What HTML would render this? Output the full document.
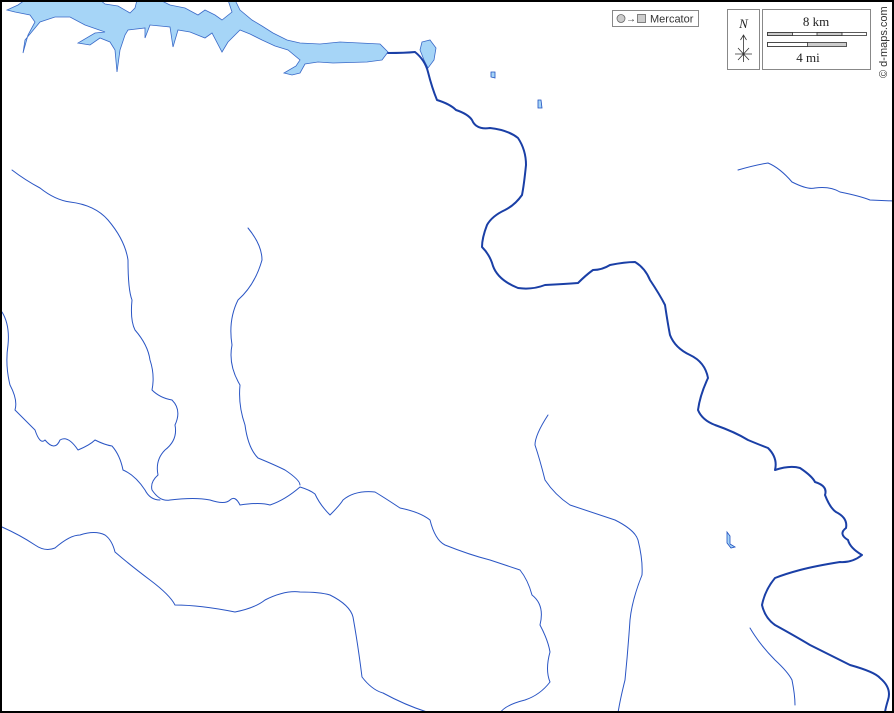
<!DOCTYPE html>
<html><head><meta charset="utf-8"><style>
html,body{margin:0;padding:0;background:#fff}
svg{display:block}
</style></head><body>
<svg width="894" height="713" viewBox="0 0 894 713" xmlns="http://www.w3.org/2000/svg">
<rect x="0" y="0" width="894" height="713" fill="#fff"/>
<!-- lake -->
<path d="M7,10 L18,5 L25,0 L100,0 L105,4 L118,6 L130,13 L135,8 L137,0 L160,0 L170,5 L185,8 L198,15 L205,10 L215,15 L222,20 L232,12 L228,0 L235,0 L240,10 L252,20 L262,26 L273,33 L287,40 L300,43 L320,44 L340,42 L360,43 L380,44 L388,52 L382,60 L367,62 L333,63 L318,62 L305,64 L300,73 L292,75 L284,73 L296,66 L300,60 L288,50 L275,46 L262,40 L250,34 L240,30 L228,42 L222,52 L212,33 L205,38 L190,32 L178,30 L173,47 L170,27 L150,25 L145,38 L145,28 L128,30 L125,35 L120,50 L117,72 L115,50 L110,42 L100,38 L90,45 L78,43 L95,33 L105,32 L85,25 L70,17 L55,17 L40,22 L25,40 L23,53 L28,35 L35,22 L30,15 L15,12 Z" fill="#a6d5f7" stroke="#3a6ac8" stroke-width="0.8"/>
<path d="M422,42 L430,40 L436,48 L434,60 L428,68 L424,60 L420,50 Z" fill="#a6d5f7" stroke="#3a6ac8" stroke-width="0.8"/>
<path d="M491,72 l4,0 l0,6 l-4,-1 z M538,100 l3,0 l1,8 l-4,0 z M727,532 l3,4 l0,8 l5,3 l-4,1 l-4,-5 z" fill="#a6d5f7" stroke="#2050c0" stroke-width="0.8"/>
<g fill="none" stroke-linejoin="round" stroke-linecap="round">
<path d="M388,53 Q405,53 415,52 Q425,60 428,72 Q432,88 437,100 Q450,104 456,110 Q468,114 472,120 Q476,130 490,128 Q508,130 518,138 Q526,150 526,165 Q524,185 522,195 Q515,205 505,210 Q492,216 487,225 Q482,238 482,247 Q490,255 493,266 Q498,280 518,288 Q532,290 545,285 Q565,284 578,283 Q586,275 593,270 Q602,270 610,265 Q625,262 635,262 Q645,268 650,280 Q660,295 665,305 Q668,325 670,335 Q675,348 690,355 Q705,362 708,378 Q700,395 698,410 Q702,420 715,425 Q735,432 748,440 Q760,445 768,448 Q778,458 775,470 Q790,465 800,468 Q812,476 815,482 Q828,486 825,495 Q830,508 836,512 Q848,518 846,528 Q838,534 848,540 Q850,548 862,555 Q852,563 840,562 Q815,566 800,570 Q785,574 775,578 Q765,590 762,605 Q765,618 775,625 Q795,636 810,645 Q830,655 850,665 Q875,672 880,678 Q892,688 888,700 Q885,710 885,713" stroke="#1a3fa6" stroke-width="2"/>
<g stroke="#2a55c4" stroke-width="1">
<path d="M12,170 Q25,180 40,188 Q55,200 70,202 Q95,205 108,220 Q125,240 128,260 Q128,290 132,300 Q130,320 135,330 Q148,345 150,360 Q155,375 152,390 Q160,398 172,400 Q182,410 175,425 Q178,440 165,450 Q155,460 158,475 Q150,482 152,490 Q160,502 170,500 Q195,497 210,500 Q225,505 230,500 Q235,495 240,505 Q260,502 270,505 Q285,500 300,487 Q310,490 315,494 Q320,505 330,515 Q340,505 343,500 Q355,490 375,492 Q385,498 400,508 Q420,512 430,520 Q435,540 445,545 Q470,555 490,560 Q505,565 520,570 Q528,580 532,595 Q545,605 540,625 Q548,640 550,652 Q545,670 550,682 Q540,695 525,700 Q505,705 500,713"/>
<path d="M248,228 Q262,245 262,260 Q255,285 238,300 Q228,320 232,345 Q228,365 240,385 Q238,405 245,425 Q248,448 258,458 Q275,465 285,470 Q300,480 300,485"/>
<path d="M2,312 Q10,325 8,345 Q5,365 10,385 Q18,400 15,410 Q25,420 35,430 Q40,445 45,440 Q55,452 60,440 Q68,435 78,450 Q90,445 95,440 Q105,445 112,446 Q120,455 123,470 Q135,475 145,490 Q150,500 160,500"/>
<path d="M2,527 Q20,535 35,545 Q45,552 55,548 Q70,535 80,535 Q95,530 105,535 Q112,540 115,552 Q130,565 150,580 Q170,595 175,605 Q200,605 235,612 Q255,608 265,600 Q285,590 300,592 Q320,592 330,595 Q350,605 353,617 Q358,645 362,677 Q372,690 383,693 Q405,705 427,712"/>
<path d="M548,415 Q535,435 535,445 Q540,460 545,480 Q555,495 570,505 Q600,515 615,520 Q635,530 638,540 Q643,560 642,575 Q632,600 630,620 Q628,650 625,680 Q620,700 618,713"/>
<path d="M738,170 Q755,165 768,163 Q780,168 792,182 Q808,190 815,188 Q830,186 840,192 Q860,196 870,200 L894,201"/>
<path d="M750,628 Q760,645 775,660 Q788,672 792,680 Q795,695 795,705"/>
</g>
</g>
<!-- legend -->
<rect x="612.5" y="10.5" width="86" height="16" fill="#fff" stroke="#888"/>
<circle cx="621" cy="18.5" r="4" fill="#ccc" stroke="#666" stroke-width="0.8"/>
<text x="626" y="22" font-family="Liberation Sans, sans-serif" font-size="10" fill="#333">→</text>
<rect x="637.5" y="14.5" width="8" height="8" fill="#ccc" stroke="#666" stroke-width="0.8"/>
<text x="650" y="22.5" font-family="Liberation Sans, sans-serif" font-size="11" fill="#333">Mercator</text>
<rect x="727.5" y="9.5" width="32" height="60" fill="#fff" stroke="#888"/>
<text x="743.5" y="28" text-anchor="middle" font-family="Liberation Serif, serif" font-style="italic" font-size="13" fill="#222">N</text>
<path d="M743.5,35 L743.5,62 M740.5,40 L743.5,35 L746.5,40 M735,54 L752,54 M738,48 L749,60 M749,48 L738,60" stroke="#333" stroke-width="0.8" fill="none"/>
<rect x="762.5" y="9.5" width="108" height="60" fill="#fff" stroke="#888"/>
<text x="816" y="26" text-anchor="middle" font-family="Liberation Serif, serif" font-size="13" fill="#222">8 km</text>
<rect x="767.5" y="32.5" width="99" height="3" fill="#fff" stroke="#333" stroke-width="0.8"/>
<rect x="767.5" y="32.5" width="25" height="3" fill="#ccc" stroke="#333" stroke-width="0.8"/>
<rect x="817" y="32.5" width="25" height="3" fill="#ccc" stroke="#333" stroke-width="0.8"/>
<rect x="767.5" y="42.5" width="79" height="4" fill="#ccc" stroke="#333" stroke-width="0.8"/>
<rect x="767.5" y="42.5" width="40" height="4" fill="#fff" stroke="#333" stroke-width="0.8"/>
<text x="808" y="62" text-anchor="middle" font-family="Liberation Serif, serif" font-size="13" fill="#222">4 mi</text>
<text transform="translate(887,78) rotate(-90)" font-family="Liberation Sans, sans-serif" font-size="11" fill="#333">© d-maps.com</text>
<rect x="1" y="1" width="892" height="711" fill="none" stroke="#000" stroke-width="2"/>
</svg>
</body></html>
